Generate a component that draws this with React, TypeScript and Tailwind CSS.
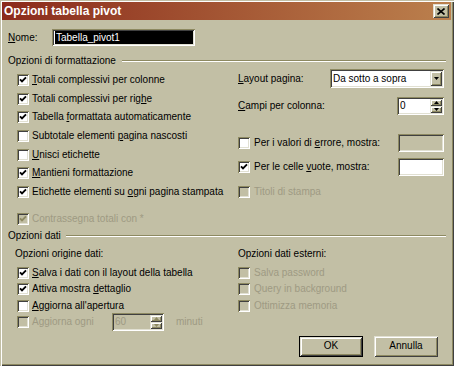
import React from "react";

const SUNKEN =
  "shadow-[inset_1px_1px_0_#8d8961,inset_-1px_-1px_0_#ffffff,inset_2px_2px_0_#404040,inset_-2px_-2px_0_#e1e0d2]";
const RAISED =
  "shadow-[inset_1px_1px_0_#e1e0d2,inset_-1px_-1px_0_#404040,inset_2px_2px_0_#ffffff,inset_-2px_-2px_0_#8d8961]";
const DIS = "text-[#9e9a83]";

function Check({ checked, disabled }: { checked?: boolean; disabled?: boolean }) {
  return (
    <div
      className={`relative w-[12px] h-[12px] shrink-0 ${SUNKEN} ${
        disabled ? "bg-[#c2bfa5]" : "bg-white"
      }`}
    >
      {checked && (
        <svg className="absolute left-[2px] top-[2px]" width="8" height="8" viewBox="0 0 8 8">
          <path
            d="M1 3.3 L3 5.3 L7 1.3"
            fill="none"
            stroke={disabled ? "#8d8961" : "#000"}
            strokeWidth="1.9"
          />
        </svg>
      )}
    </div>
  );
}

function Tri({ up, color = "#000" }: { up?: boolean; color?: string }) {
  return (
    <svg width="5" height="3" viewBox="0 0 5 3">
      <path d={up ? "M0 3 L5 3 L2.5 0 Z" : "M0 0 L5 0 L2.5 3 Z"} fill={color} />
    </svg>
  );
}

function U({ children }: { children: React.ReactNode }) {
  return <span className="underline underline-offset-[1px]">{children}</span>;
}

function Spin({ value, disabled, w }: { value: string; disabled?: boolean; w: string }) {
  return (
    <div
      className={`${w} h-[18px] ${SUNKEN} ${
        disabled ? "bg-[#c2bfa5]" : "bg-white"
      } flex items-stretch p-[2px]`}
    >
      <div className={`flex-1 flex items-center pl-[1px] ${disabled ? DIS : ""}`}>{value}</div>
      <div className="w-[12px] flex flex-col">
        <div className={`flex-1 bg-[#c2bfa5] ${RAISED} flex items-center justify-center`}>
          <Tri up color={disabled ? "#8d8961" : "#000"} />
        </div>
        <div className={`flex-1 bg-[#c2bfa5] ${RAISED} flex items-center justify-center`}>
          <Tri color={disabled ? "#8d8961" : "#000"} />
        </div>
      </div>
    </div>
  );
}

export default function App() {
  return (
    <div
      className="w-[454px] h-[366px] bg-[#c2bfa5] flex flex-col pl-[2px] pt-[2px] pr-[3px] pb-[3px] shadow-[inset_1px_1px_0_#c2bfa5,inset_2px_2px_0_#ffffff,inset_-1px_-1px_0_#404040,inset_-2px_-2px_0_#8d8961] font-['Liberation_Sans',Arial,sans-serif] text-[10px] text-black leading-none overflow-hidden"
    >
      {/* Title bar */}
      <div className="h-[18px] shrink-0 flex items-center justify-between bg-linear-to-r from-[#8b2a1c] to-[#bb804d] pl-[2px] pr-[2px]">
        <span className="text-white font-bold text-[12px]">Opzioni tabella pivot</span>
        <div className={`w-[16px] h-[14px] bg-[#c2bfa5] ${RAISED} flex items-center justify-center`}>
          <svg width="8" height="7" viewBox="0 0 8 7">
            <path d="M0.5 0.5 L7.5 6.5 M7.5 0.5 L0.5 6.5" stroke="#000" strokeWidth="1.6" />
          </svg>
        </div>
      </div>

      {/* Nome */}
      <div className="mt-[9px] h-[17px] flex items-center pl-[6px]">
        <span className="w-[44px]">
          <U>N</U>ome:
        </span>
        <div className={`w-[143px] h-[17px] bg-white ${SUNKEN} p-[2px] flex`}>
          <div className="ml-[1px] flex-1 bg-black text-white flex items-center pl-[1px]">
            Tabella_pivot1
          </div>
        </div>
      </div>

      {/* Opzioni di formattazione header */}
      <div className="mt-[8px] h-[14px] flex items-center pl-[6px] pr-[5px]">
        <span>Opzioni di formattazione</span>
        <div className="flex-1 ml-[6px] h-[2px] border-t border-t-[#8d8961] border-b border-b-white" />
      </div>

      {/* Formatting columns */}
      <div className="flex">
        <div className="w-[236px] pl-[15px] pt-[2.67px] flex flex-col">
          <div className="h-[18.67px] flex items-center gap-[3px]">
            <Check checked />
            <span>
              <U>T</U>otali complessivi per colonne
            </span>
          </div>
          <div className="h-[18.67px] flex items-center gap-[3px]">
            <Check checked />
            <span>
              Totali complessivi per rig<U>h</U>e
            </span>
          </div>
          <div className="h-[18.67px] flex items-center gap-[3px]">
            <Check checked />
            <span>
              Tabella <U>f</U>ormattata automaticamente
            </span>
          </div>
          <div className="h-[18.67px] flex items-center gap-[3px]">
            <Check />
            <span>
              Subtotale elementi <U>p</U>agina nascosti
            </span>
          </div>
          <div className="h-[18.67px] flex items-center gap-[3px]">
            <Check />
            <span>
              <U>U</U>nisci etichette
            </span>
          </div>
          <div className="h-[18.67px] flex items-center gap-[3px]">
            <Check checked />
            <span>
              <U>M</U>antieni formattazione
            </span>
          </div>
          <div className="h-[18.67px] flex items-center gap-[3px]">
            <Check checked />
            <span>
              Etichette elementi su <U>o</U>gni pagina stampata
            </span>
          </div>
          <div className="mt-[8.67px] h-[18.67px] flex items-center gap-[3px]">
            <Check checked disabled />
            <span className={DIS}>Contrassegna totali con *</span>
          </div>
        </div>

        <div className="w-[206px] flex flex-col">
          <div className="mt-[1px] h-[19px] flex items-center justify-between">
            <span>
              <U>L</U>ayout pagina:
            </span>
            <div className={`w-[114px] h-[19px] bg-white ${SUNKEN} p-[2px] flex`}>
              <div className="flex-1 flex items-center pl-[1px]">Da sotto a sopra</div>
              <div className={`w-[12px] bg-[#c2bfa5] ${RAISED} flex items-center justify-center`}>
                <Tri />
              </div>
            </div>
          </div>
          <div className="mt-[9px] h-[18px] flex items-center justify-between">
            <span>
              <U>C</U>ampi per colonna:
            </span>
            <Spin value="0" w="w-[47px]" />
          </div>
          <div className="mt-[19px] h-[18px] flex items-center justify-between">
            <div className="flex items-center gap-[4px]">
              <Check />
              <span>
                Per i valori di <U>e</U>rrore, mostra:
              </span>
            </div>
            <div className={`w-[46px] h-[18px] bg-[#c2bfa5] ${SUNKEN}`} />
          </div>
          <div className="mt-[6px] h-[18px] flex items-center justify-between">
            <div className="flex items-center gap-[4px]">
              <Check checked />
              <span>
                Per le celle <U>v</U>uote, mostra:
              </span>
            </div>
            <div className={`w-[46px] h-[18px] bg-white ${SUNKEN}`} />
          </div>
          <div className="mt-[9px] h-[14px] flex items-center gap-[4px]">
            <Check disabled />
            <span className={DIS}>Titoli di stampa</span>
          </div>
        </div>
      </div>

      {/* Opzioni dati header */}
      <div className="h-[15px] flex items-center pl-[6px] pr-[5px]">
        <span>Opzioni dati</span>
        <div className="flex-1 ml-[5px] h-[2px] border-t border-t-[#8d8961] border-b border-b-white" />
      </div>

      {/* Data options */}
      <div className="mt-[2px] flex">
        <div className="w-[236px] flex flex-col">
          <div className="h-[17px] flex items-center pl-[13px]">Opzioni origine dati:</div>
          <div className="mt-[2px] pl-[15px] flex flex-col">
            <div className="h-[16.5px] flex items-center gap-[3px]">
              <Check checked />
              <span>
                <U>S</U>alva i dati con il layout della tabella
              </span>
            </div>
            <div className="h-[16.5px] flex items-center gap-[3px]">
              <Check checked />
              <span>
                Attiva mostra <U>d</U>ettaglio
              </span>
            </div>
            <div className="h-[16.5px] flex items-center gap-[3px]">
              <Check />
              <span>
                <U>A</U>ggiorna all'apertura
              </span>
            </div>
            <div className="h-[16.5px] flex items-center gap-[3px]">
              <Check disabled />
              <span className={`w-[77px] ${DIS}`}>Aggiorna ogni</span>
              <Spin value="60" disabled w="w-[52px]" />
              <span className={`ml-[9px] ${DIS}`}>minuti</span>
            </div>
          </div>
        </div>
        <div className="w-[206px] flex flex-col">
          <div className="h-[17px] flex items-center">Opzioni dati esterni:</div>
          <div className="mt-[2px] flex flex-col">
            <div className="h-[16.5px] flex items-center gap-[4px]">
              <Check disabled />
              <span className={DIS}>Salva password</span>
            </div>
            <div className="h-[16.5px] flex items-center gap-[4px]">
              <Check disabled />
              <span className={DIS}>Query in background</span>
            </div>
            <div className="h-[16.5px] flex items-center gap-[4px]">
              <Check disabled />
              <span className={DIS}>Ottimizza memoria</span>
            </div>
          </div>
        </div>
      </div>

      {/* Buttons */}
      <div className="mt-[5px] flex justify-end gap-[11px] pr-[13px]">
        <div className="w-[64px] h-[21px] border border-black">
          <div className={`w-full h-full bg-[#c2bfa5] ${RAISED} flex items-center justify-center`}>
            OK
          </div>
        </div>
        <div className={`w-[64px] h-[21px] bg-[#c2bfa5] ${RAISED} flex items-center justify-center`}>
          Annulla
        </div>
      </div>
    </div>
  );
}
